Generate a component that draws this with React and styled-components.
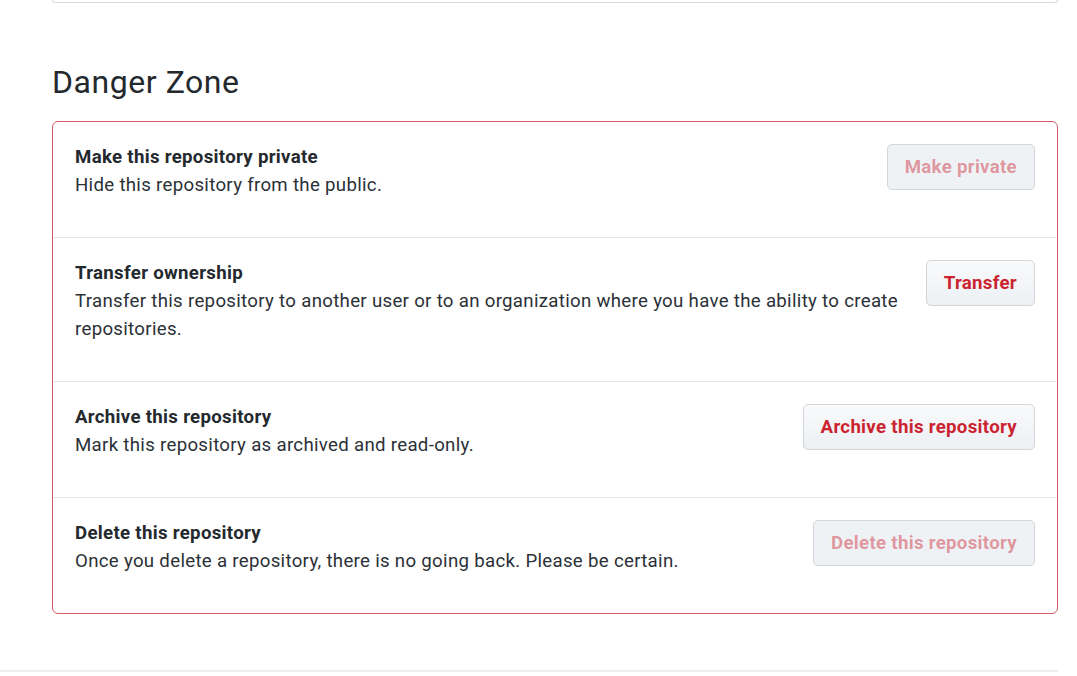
import React from "react";
import styled, { createGlobalStyle } from "styled-components";

const GlobalStyle = createGlobalStyle`
  html, body { margin: 0; padding: 0; background: #ffffff; }
  body {
    font-family: Roboto, "Liberation Sans", Arial, sans-serif;
    color: #24292e;
    -webkit-font-smoothing: antialiased;
  }
`;

const Page = styled.div`
  width: 1058px;
  display: flex;
  flex-direction: column;
`;

const Content = styled.div`
  padding-left: 52px;
  display: flex;
  flex-direction: column;
`;

const PrevCard = styled.div`
  height: 2px;
  border: 1px solid #d8dbdf;
  border-top: none;
  border-radius: 0 0 7px 7px;
`;

const Heading = styled.h2`
  margin: 61px 0 0;
  font-size: 32px;
  font-weight: 400;
  line-height: 37.5px;
  letter-spacing: 0.55px;
  color: #24292e;
`;

const DangerBox = styled.div`
  margin-top: 19.5px;
  border: 1px solid #d65a66;
  border-radius: 6px;
  display: flex;
  flex-direction: column;
`;

const Row = styled.div`
  display: flex;
  align-items: flex-start;
  padding: 21px 22px 21px 22px;
  border-top: ${(p) => (p.$first ? "none" : "1px solid #e4e6e9")};
`;

const Info = styled.div`
  flex: 1;
  min-width: 0;
  margin-bottom: 17px;
`;

const Title = styled.div`
  font-size: 18.67px;
  line-height: 28px;
  font-weight: 700;
  letter-spacing: 0.3px;
  color: #24292e;
`;

const Desc = styled.p`
  margin: 0;
  font-size: 18.67px;
  line-height: 28px;
  font-weight: 400;
  letter-spacing: 0.3px;
  color: #2b3137;
`;

const DangerButton = styled.button`
  flex-shrink: 0;
  margin-left: 16px;
  margin-top: 1px;
  padding: 8px 17px;
  font-family: Roboto, "Liberation Sans", Arial, sans-serif;
  font-size: 18.67px;
  line-height: 28px;
  font-weight: 700;
  letter-spacing: 0.3px;
  color: ${(p) => (p.disabled ? "rgba(203, 36, 49, 0.45)" : "#cb2431")};
  background: ${(p) =>
    p.disabled
      ? "#eff2f5"
      : "linear-gradient(180deg, #f9fafb 0%, #eef1f4 90%)"};
  border: 1px solid #d2d5d9;
  border-radius: 5px;
  white-space: nowrap;
  cursor: ${(p) => (p.disabled ? "default" : "pointer")};
`;

const FooterRule = styled.div`
  margin-top: 56px;
  height: 2px;
  background: #eceef0;
`;

const rows = [
  {
    title: "Make this repository private",
    desc: "Hide this repository from the public.",
    action: "Make private",
    disabled: true,
  },
  {
    title: "Transfer ownership",
    desc: "Transfer this repository to another user or to an organization where you have the ability to create repositories.",
    action: "Transfer",
  },
  {
    title: "Archive this repository",
    desc: "Mark this repository as archived and read-only.",
    action: "Archive this repository",
  },
  {
    title: "Delete this repository",
    desc: "Once you delete a repository, there is no going back. Please be certain.",
    action: "Delete this repository",
    disabled: true,
  },
];

export default function App() {
  return (
    <>
      <GlobalStyle />
      <Page>
        <Content>
          <PrevCard />
          <Heading>Danger Zone</Heading>
          <DangerBox>
            {rows.map((r, i) => (
              <Row key={r.title} $first={i === 0}>
                <Info>
                  <Title>{r.title}</Title>
                  <Desc>{r.desc}</Desc>
                </Info>
                <DangerButton type="button" disabled={r.disabled}>
                  {r.action}
                </DangerButton>
              </Row>
            ))}
          </DangerBox>
        </Content>
        <FooterRule />
      </Page>
    </>
  );
}
